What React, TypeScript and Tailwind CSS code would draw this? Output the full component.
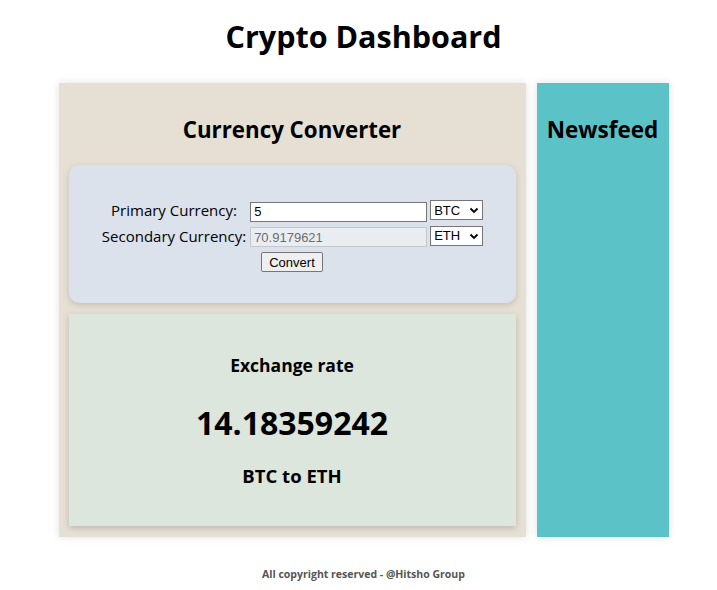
export default function App() {
  return (
    <div className="min-h-[590px] bg-white pl-[10px] font-['Open_Sans',sans-serif] text-black">
      <h1 className="pt-[14px] text-center text-[30.5px] font-bold leading-[44px]">
        Crypto Dashboard
      </h1>

      <div className="mt-[25px] flex justify-center gap-[11px]">
        {/* Converter column */}
        <div className="w-[467px] bg-[#e5dfd4] px-[10px] pb-[11px] shadow-[0_0_8px_rgba(0,0,0,0.12)]">
          <h2 className="pt-[32px] pb-[20px] text-center text-[22.3px] font-bold leading-[30px]">
            Currency Converter
          </h2>

          <div className="flex h-[138px] flex-col items-center justify-center rounded-[10px] bg-[#dbe2ec] shadow-[0_2px_6px_rgba(0,0,0,0.15)]">
            <table className="border-separate border-spacing-[3px] text-[15px]">
              <tbody>
                <tr>
                  <td className="text-center px-[1px]">Primary Currency:</td>
                  <td>
                    <input
                      readOnly
                      value="5"
                      className="h-[20px] w-[177px] border border-[#767676] bg-white px-[3px] font-['Liberation_Sans',sans-serif] text-[13px]"
                    />
                  </td>
                  <td>
                    <Select label="BTC" />
                  </td>
                </tr>
                <tr>
                  <td className="text-center px-[1px]">Secondary Currency:</td>
                  <td>
                    <input
                      readOnly
                      value="70.9179621"
                      className="h-[20px] w-[177px] border border-[#c3c7cc] bg-[#e9edf2] px-[3px] font-['Liberation_Sans',sans-serif] text-[13px] text-[#6d6d6d]"
                    />
                  </td>
                  <td>
                    <Select label="ETH" />
                  </td>
                </tr>
              </tbody>
            </table>
            <button className="mt-[2px] h-[20px] rounded-[2px] border border-[#767676] bg-[#efefef] px-[7px] font-['Liberation_Sans',sans-serif] text-[13px] leading-none">
              Convert
            </button>
          </div>

          <div className="mt-[11px] flex h-[212px] flex-col items-center justify-center bg-[#dde6dc] shadow-[0_2px_6px_rgba(0,0,0,0.18)]">
            <h3 className="text-[17.5px] font-bold leading-[24px]">Exchange rate</h3>
            <p className="mt-[25px] text-[32px] font-bold leading-[42px]">14.18359242</p>
            <h3 className="mt-[20px] text-[18.5px] font-bold leading-[24px]">BTC to ETH</h3>
          </div>
        </div>

        {/* Newsfeed column */}
        <div className="w-[132px] bg-[#5bc3c8] shadow-[0_0_8px_rgba(0,0,0,0.12)]">
          <h2 className="pt-[32px] text-center text-[22.5px] font-bold leading-[30px]">
            Newsfeed
          </h2>
        </div>
      </div>

      <p className="mt-[30px] text-center text-[10.5px] font-bold text-[#555]">
        All copyright reserved - @Hitsho Group
      </p>
    </div>
  );
}

function Select({ label }: { label: string }) {
  return (
    <div className="flex h-[20px] w-[53px] items-center justify-between border border-[#767676] bg-white pl-[3px] pr-[3px] font-['Liberation_Sans',sans-serif] text-[13px]">
      <span>{label}</span>
      <svg width="10" height="10" viewBox="0 0 10 10">
        <path d="M1.5 3.5 L5 7 L8.5 3.5" fill="none" stroke="#000" strokeWidth="1.8" />
      </svg>
    </div>
  );
}
